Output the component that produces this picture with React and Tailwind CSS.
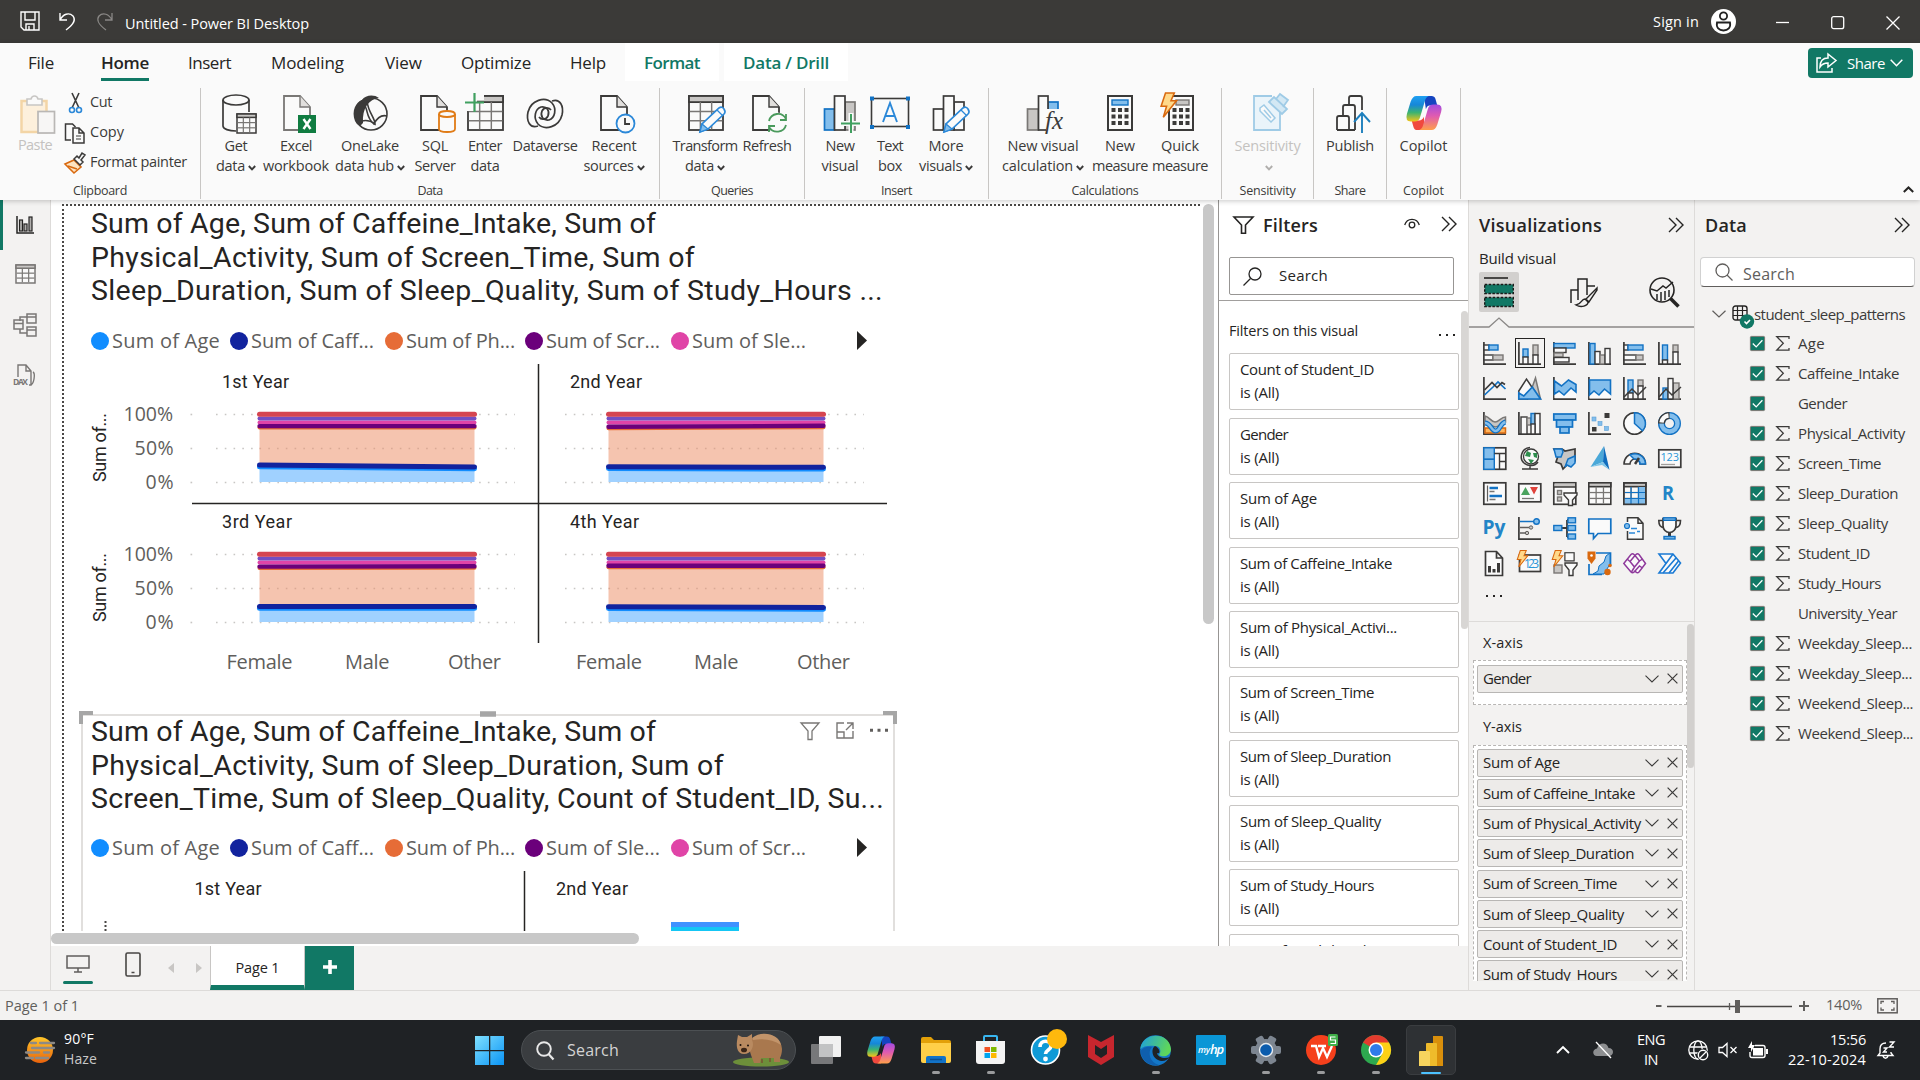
import React, { useLayoutEffect, useRef, useState } from "react";

/* Text run tracked so that it fills a given width */
function Fit({ w, className = "pb-[2px]", children }) {
  const ref = useRef(null);
  const [ls, setLs] = useState(0);
  useLayoutEffect(() => {
    const natural = ref.current.getBoundingClientRect().width;
    setLs((w - natural) / String(children).length);
  }, []);
  return (
    <span ref={ref} className={"inline-block whitespace-pre " + className} style={{ letterSpacing: ls ? ls + "px" : undefined }}>
      {children}
    </span>
  );
}

const D = "#3b3a39";
const kinds = {
  b: { fill: "#83beec", stroke: "#1272c4" },
  g: { fill: "#c8c6c4", stroke: "#797775" },
  w: { fill: "#fafafa", stroke: D },
  n: { fill: "none", stroke: D },
};
const R = ({ x, y, w, h, k = "w", s = 1.4 }) => <rect x={x} y={y} width={w} height={h} strokeWidth={s} {...kinds[k]} />;
const P = ({ d, c = D, f = "none", s = 1.5, ...o }) => <path d={d} stroke={c} fill={f} strokeWidth={s} {...o} />;
const Ax = () => <P d="M.9 0V22.2H23" s={1.7} />;

const Svg = ({ w, h, vb, className = "", children }) => (
  <svg width={w} height={h} viewBox={vb || `0 0 ${w} ${h}`} className={"shrink-0 overflow-visible " + className} fill="none">
    {children}
  </svg>
);

const Bolt = ({ t }) => <path transform={t} d="M5 0h8l-3 7h5L3 22l3-10H1z" fill="#ffd98a" stroke="#d9690f" strokeWidth="1.4" />;
const Pencil = ({ t }) => (
  <g transform={t}>
    <path d="M0 25l2-8L19 1q3-2 5 1t0 5L8 22z" fill="#fafafa" stroke="#2b88d8" strokeWidth="1.7" />
    <path d="M0 25l2-8 6 5z" fill="#83beec" stroke="#2b88d8" strokeWidth="1.3" />
    <path d="M17 3l6 6" stroke="#2b88d8" strokeWidth="1.2" />
  </g>
);
const Doc = ({ x = 6, c = D, f = "#fafafa" }) => (
  <g transform={`translate(${x} 1)`}>
    <path d="M1 1h16l10 11v23H1z" fill={f} stroke={c} strokeWidth="1.8" />
    <path d="M17 1v11h10" fill="#e1dfdd" stroke={c} strokeWidth="1.4" />
  </g>
);
const Grid = ({ x, y, w, h, c = D, head = "#c8c6c4", rows = 3, s = 1.5 }) => {
  const hh = h * 0.18;
  const rh = (h - hh) / rows;
  return (
    <g stroke={c} strokeWidth={s}>
      <rect x={x} y={y} width={w} height={h} fill="#fafafa" />
      <rect x={x} y={y} width={w} height={hh} fill={head} />
      {Array.from({ length: rows - 1 }, (_, i) => (
        <path key={i} strokeWidth={s * 0.8} stroke="#797775" d={`M${x + 0.7} ${y + hh + rh * (i + 1)}h${w - 1.4}`} />
      ))}
      <path strokeWidth={s * 0.8} stroke="#797775" d={`M${x + w / 3} ${y + hh}V${y + h - 0.7}M${x + (2 * w) / 3} ${y + hh}V${y + h - 0.7}`} />
    </g>
  );
};

const CopilotMark = ({ size, id, className = "" }) => (
  <Svg w={size} h={size} vb="0 0 40 40" className={className}>
    <defs>
      <linearGradient id={id + "a"} x1="0" y1="0" x2="0" y2="1">
        <stop offset="0" stopColor="#1fa0f2" /><stop offset=".35" stopColor="#1687d8" /><stop offset=".65" stopColor="#3cb371" /><stop offset="1" stopColor="#f5c518" />
      </linearGradient>
      <linearGradient id={id + "b"} x1="0" y1="0" x2="0" y2="1">
        <stop offset="0" stopColor="#a24be0" /><stop offset=".45" stopColor="#e05bb0" /><stop offset="1" stopColor="#ff9f4a" />
      </linearGradient>
    </defs>
    <path d="M20 2h8q3 0 4 3l2 7h-8q-3 0-4 4z" fill="#1544c0" />
    <path d="M20 38h-7q-3 0-4-3l-2-7h8q3 0 5-4z" fill="#f0493e" />
    <path d="M12 2h13q-3 1-4 5l-5 17q-1 5-6 5H6q-6 0-4-8L6 8q2-6 6-6z" fill={`url(#${id}a)`} />
    <path d="M28 38H15q3-1 4-5l5-17q1-5 6-5h4q6 0 4 8l-4 13q-2 6-6 6z" fill={`url(#${id}b)`} />
  </Svg>
);

/* ---------- Ribbon ---------- */
const icons = {
  get: (
    <>
      <path d="M7 6v26c0 3 6 5 13 5" stroke={D} strokeWidth="1.7" />
      <path d="M33 6v12" stroke={D} strokeWidth="1.7" />
      <ellipse cx="20" cy="6" rx="13" ry="5" stroke={D} strokeWidth="1.7" />
      <Grid x={21} y={20} w={19} h={19} />
    </>
  ),
  excel: (
    <>
      <Doc x={7} c="#797775" />
      <rect x="22" y="21" width="18" height="18" fill="#107c41" />
      <path d="M27.500 25l7 10M34.500 25l-7 10" stroke="#fff" strokeWidth="2.400" />
    </>
  ),
  lake: (
    <>
      <circle cx="21" cy="20" r="16" stroke={D} strokeWidth="1.6" />
      <path d="M5 27C1 17 6 8 12 6 15 1 24 0 29 4 19 5 12 14 13 29l-3 3q-4-2-5-5z" fill={D} />
      <path d="M13 9c6 6 2 14 11 21 4-8 9-9 13-8M17 7c1 11 8 17 8 23-4-3-9-4-13-3" stroke={D} strokeWidth="1.6" />
    </>
  ),
  sql: (
    <>
      <Doc x={5} />
      <path d="M24 20v15c0 4 16 4 16 0V20" fill="#fafafa" stroke="#e07b16" strokeWidth="1.8" />
      <ellipse cx="32" cy="20" rx="8" ry="3" fill="#fafafa" stroke="#e07b16" strokeWidth="1.8" />
    </>
  ),
  enter: (
    <>
      <Grid x={3} y={2} w={35} h={34} s={1.8} />
      <path d="M-1-2h20v8h-7v8h-3v3h-10z" fill="#fafafa" />
      <path d="M9.500-1v19M0 8.500h19" stroke="#40a060" strokeWidth="2.200" />
    </>
  ),
  verse: (
    <g stroke={D} strokeWidth="1.7">
      <path d="M13 32C5 35 1 27 3 18 6 6 20 2 27 9c5 6 3 15-3 17-6 1-9-4-7-9 2-4 7-4 9-1" />
      <path d="M27 7c8-3 12 5 10 14-3 12-17 16-24 9-5-6-3-15 3-17 6-1 9 4 7 9-2 4-7 4-9 1" />
    </g>
  ),
  recent: (
    <>
      <Doc x={6} />
      <circle cx="31.500" cy="29.500" r="9" fill="#fafafa" stroke="#2b88d8" strokeWidth="1.8" />
      <P d="M31 24v6h5" s={1.8} />
    </>
  ),
  transform: (
    <>
      <Grid x={4} y={2} w={34} h={34} s={1.8} />
      <Pencil t="translate(15 13)" />
    </>
  ),
  refresh: (
    <>
      <Doc x={5} />
      <circle cx="30.500" cy="29" r="10.500" fill="#fafafa" />
      <path d="M22 27c2-8 13-10 17-2M39 20v6h-6M39 31c-2 8-13 9-17 2M22 38v-6h6" stroke="#4a9a5c" strokeWidth="1.8" />
    </>
  ),
  newvis: (
    <>
      <R x={4.500} y={15} w={10} h={21} k="b" s={1.7} />
      <R x={25} y={8} w={10} h={28} k="g" s={1.7} />
      <R x={14.500} y={2} w={10.500} h={34} s={1.7} />
      <path d="M31 19v21M20 29.500h21" stroke="#fafafa" strokeWidth="5" />
      <path d="M31 20v19M21 29.500h19" stroke="#40a060" strokeWidth="2" />
    </>
  ),
  text: (
    <>
      <R x={1.500} y={4.500} w={37} h={28} k="n" s={1.6} />
      {[[0, 2.500], [36, 2.500], [0, 31], [36, 31]].map(([x, y], i) => <rect key={i} x={x} y={y} width="4" height="4" fill="#1272c4" />)}
      <path d="M13 28l7-19 7 19M15.500 22h9" stroke="#2b88d8" strokeWidth="1.9" />
    </>
  ),
  more: (
    <>
      <R x={7.500} y={15} w={10} h={21} s={1.7} />
      <R x={28} y={8} w={10} h={28} s={1.7} />
      <R x={17.500} y={2} w={10.500} h={34} s={1.7} />
      <Pencil t="translate(18 13)" />
    </>
  ),
  calc: (
    <>
      <R x={4.500} y={15} w={11} h={21} k="g" s={1.7} />
      <R x={25} y={8} w={10} h={9} k="b" s={1.7} />
      <R x={15.500} y={2} w={9.500} h={34} s={1.7} />
      <rect x="23" y="15" width="17" height="25" fill="#fafafa" />
      <text x="22" y="35" fontSize="25" fontStyle="italic" fill={D} className="font-['Liberation_Serif',serif]" textLength="18" lengthAdjust="spacingAndGlyphs">fx</text>
    </>
  ),
  measure: (
    <>
      <R x={8} y={2} w={24} h={34} s={2} />
      <R x={12} y={6} w={16} h={5} k="b" />
      {[14, 20.500, 27].map((y) => [11.500, 18, 24.500].map((x) => <rect key={x + "-" + y} x={x} y={y} width="4" height="4" fill={D} />))}
    </>
  ),
  quick: (
    <>
      <R x={9} y={2} w={24} h={34} s={2} />
      <R x={16} y={6} w={13} h={5} k="g" />
      {[14, 20.500, 27].map((y) => [12.500, 19, 25.500].map((x) => <rect key={x + "-" + y} x={x} y={y} width="4" height="4" fill={D} />))}
      <Bolt t="translate(0 -1) scale(1.1)" />
    </>
  ),
  sens: (
    <g stroke="#9fcbe6" strokeWidth="1.8">
      <path d="M32 16v20H6V2h18" fill="#eaf4fa" />
      <path d="M12 14l4-3 11 13-4 4-11-11zM16 16l7 8" fill="#fafafa" strokeWidth="1.5" />
      <path d="M21 8l5-5 13 12-5 5zM28 5l4-5 8 6-5 7" fill="#d3e8f4" />
    </g>
  ),
  publish: (
    <>
      <P s={1.8} d="M7 36h18M7 36V24q0-2 2-2h8q2 0 2 2v12M13 22v-9q0-2 2-2h8q2 0 2 2v23M19 11V4q0-2 2-2h9q2 0 2 2v12" />
      <path d="M32 39V20M24 28l8-9 8 9" stroke="#1d7fbd" strokeWidth="1.9" />
    </>
  ),
};

const Caret = ({ c = D }) => (
  <Svg w={8} h={6} className="ml-[3px] mt-[1px]"><path d="M.8 1l3.200 3.400L7.200 1" stroke={c} strokeWidth="1.9" /></Svg>
);

function Big({ icon, w, l1, l2, caret, dim }) {
  return (
    <div className={"flex shrink-0 flex-col items-center " + (dim ? "text-[#c4c2c0]" : "text-[#3b3a39]")} style={{ width: w }}>
      {icon === "copilot" ? (
        <div className="mt-[6px] h-[40px]"><CopilotMark size={38} id="cr" /></div>
      ) : (
        <Svg w={40} h={40} className="mt-[6px]">{icons[icon]}</Svg>
      )}
      <div className="mt-[3px] flex h-[20px] items-center justify-center text-[14.500px]"><Fit w={l1[1]}>{l1[0]}</Fit></div>
      <div className="flex h-[20px] items-center justify-center text-[14.500px]">
        {l2 && <Fit w={l2[1]}>{l2[0]}</Fit>}
        {caret && <Caret c={dim ? "#b0aeac" : D} />}
      </div>
    </div>
  );
}

function Group({ w, pl, label, lw, children }) {
  return (
    <div className="flex h-[111px] flex-col border-r border-[#c8c6c4]" style={{ width: w }}>
      <div className="flex h-[93px]" style={{ paddingLeft: pl }}>{children}</div>
      <div className="flex h-[18px] items-center justify-center pt-[2px] text-[12.500px] text-[#3b3a39]"><Fit w={lw} className="">{label}</Fit></div>
    </div>
  );
}

function TitleBar() {
  return (
    <div className="flex h-[43px] items-center bg-[#3b3a38] text-white">
      <Svg w={20} h={20} className="ml-[20px] -mt-[1px]">
        <path d="M1 1h18v18H4l-3-3zM5 1v8h10V1M6 19v-6h8v6M9 15v4" stroke="#fff" strokeWidth="1.4" />
      </Svg>
      <Svg w={17} h={19} className="ml-[19px]"><path d="M1 1v7h7M1 8c3-6 9-8 13-4 3 4 1 8-7 14" stroke="#fff" strokeWidth="1.400" /></Svg>
      <Svg w={17} h={19} className="ml-[20px]"><path d="M16 1v7H9M16 8C13 2 7 0 3 4c-3 4-1 8 7 14" stroke="#8a8886" strokeWidth="1.300" /></Svg>
      <div className="ml-[12px] mt-[5px] text-[14.500px]"><Fit w={184} className="">Untitled - Power BI Desktop</Fit></div>
      <div className="grow" />
      <div className="text-[14.500px]"><Fit w={46} className="">Sign in</Fit></div>
      <Svg w={25} h={25} className="ml-[12px]">
        <circle cx="12.500" cy="12.500" r="12.500" fill="#fff" />
        <circle cx="12.500" cy="7" r="3.600" stroke="#222" strokeWidth="1.8" />
        <path d="M6 13.500h13c1 5-2 8-6.500 8S5 18.500 6 13.500z" stroke="#222" strokeWidth="1.8" />
      </Svg>
      <Svg w={14} h={14} className="ml-[40px]"><path d="M0 7.500h13" stroke="#fff" strokeWidth="1.3" /></Svg>
      <Svg w={14} h={14} className="ml-[41px] mt-[3px]"><rect x=".7" y=".7" width="12" height="12" rx="2" stroke="#fff" strokeWidth="1.3" /></Svg>
      <Svg w={14} h={14} className="ml-[41px] mr-[20px] mt-[3px]"><path d="M.5 .5l13 13M13.500 .5l-13 13" stroke="#fff" strokeWidth="1.3" /></Svg>
    </div>
  );
}

function Tabs() {
  const tabs = [["File", 26, 28], ["Home", 48, 47], ["Insert", 43, 39], ["Modeling", 73, 40], ["View", 37, 41], ["Optimize", 70, 39], ["Help", 36, 39]];
  return (
    <div className="flex h-[38px] text-[17px] text-[#252423]">
      {tabs.map(([t, w, ml]) => (
        <div key={t} style={{ marginLeft: ml, width: w }} className={"flex items-center whitespace-nowrap " + (t === "Home" ? "border-b-[3px] border-[#117865] pt-[4px] font-semibold" : "pt-[1px]")}>
          <Fit w={w} className="">{t}</Fit>
        </div>
      ))}
      <div className="ml-[19px] flex w-[94px] items-center justify-center bg-white pt-[1px] font-semibold text-[#117865]"><Fit w={56} className="">Format</Fit></div>
      <div className="ml-[5px] flex w-[124px] items-center justify-center bg-white pt-[1px] font-semibold text-[#117865]"><Fit w={86} className="">Data / Drill</Fit></div>
      <div className="ml-auto mr-[7px] mt-[5px] flex h-[30px] w-[105px] items-center rounded bg-[#117865] pl-[8px] text-[15px] text-white">
        <Svg w={21} h={20}>
          <path d="M5 5H1v14h15v-4" stroke="#fff" strokeWidth="1.500" />
          <path d="M12 1l8 6.500-8 6.500v-4c-4 0-6 1-8 4 0-6 3-9 8-9z" stroke="#fff" strokeWidth="1.500" />
        </Svg>
        <span className="ml-[10px]"><Fit w={38} className="">Share</Fit></span>
        <Svg w={13} h={8} className="ml-[5px]"><path d="M.7 .7l5.800 6 5.800-6" stroke="#fff" strokeWidth="1.500" /></Svg>
      </div>
    </div>
  );
}

function Ribbon() {
  return (
    <div className="relative z-10 h-[157px] bg-[#fafafa] shadow-[0_1px_5px_rgba(0,0,0,.22)]">
      <Tabs />
      <div className="flex pt-[7px]">
        <Group w={201} pl={0} label="Clipboard" lw={54}>
          <div className="w-[64px] pl-[19px] pt-[7px] text-[#c4c2c0]">
            <Svg w={36} h={38}>
              <rect x="2.500" y="6" width="25" height="31" fill="#fdf0dc" stroke="#f3d5a6" strokeWidth="2.500" />
              <path d="M8 4h4c1-4 6-4 7 0h4v6H8z" fill="#fafafa" stroke="#c8c6c4" strokeWidth="1.6" />
              <rect x="19" y="16.500" width="16.500" height="21.500" fill="#f7f6f5" stroke="#b9b7b5" strokeWidth="1.7" />
            </Svg>
            <div className="-ml-[1px] mt-[3px] flex h-[20px] items-center text-[14.500px]"><Fit w={34}>Paste</Fit></div>
          </div>
          <div className="text-[14.500px] text-[#3b3a39]">
            <div className="flex h-[30px] items-center">
              <Svg w={22} h={22} className="mr-[4px]">
                <path d="M8 1l7 15M15 1L8 16" stroke={D} strokeWidth="1.600" />
                <circle cx="8" cy="18" r="2.500" stroke="#2b88d8" strokeWidth="1.600" /><circle cx="15" cy="18" r="2.500" stroke="#2b88d8" strokeWidth="1.600" />
              </Svg>
              <Fit w={22}>Cut</Fit>
            </div>
            <div className="flex h-[30px] items-center">
              <Svg w={22} h={22} className="mr-[4px]">
                <path d="M7 18H1.500V2h7l3 3" stroke={D} strokeWidth="1.500" />
                <path d="M9 6h6l5 5v10H9zM15 6v5h5" fill="#fafafa" stroke={D} strokeWidth="1.500" /><path d="M12 14h5M12 17h5" stroke={D} />
              </Svg>
              <Fit w={34}>Copy</Fit>
            </div>
            <div className="flex h-[30px] items-center">
              <Svg w={22} h={22} className="mr-[4px]">
                <path d="M1 12l9-4 7 7-7 6z" fill="#fde3c0" stroke="#d9690f" strokeWidth="1.600" /><path d="M4 14l9 3" stroke="#d9690f" strokeWidth="1.400" />
                <path d="M10 7l3-3 2 2 3-5 3 2-4 5 2 2-3 3z" fill="#fafafa" stroke={D} strokeWidth="1.500" />
              </Svg>
              <Fit w={97}>Format painter</Fit>
            </div>
          </div>
        </Group>
        <Group w={459} pl={5} label="Data" lw={25}>
          <Big icon="get" w={60} l1={["Get", 23]} l2={["data", 29]} caret />
          <Big icon="excel" w={60} l1={["Excel", 32]} l2={["workbook", 66]} />
          <Big icon="lake" w={88} l1={["OneLake", 58]} l2={["data hub", 59]} caret />
          <Big icon="sql" w={42} l1={["SQL", 26]} l2={["Server", 41]} />
          <Big icon="enter" w={58} l1={["Enter", 34]} l2={["data", 29]} />
          <Big icon="verse" w={62} l1={["Dataverse", 65]} />
          <Big icon="recent" w={76} l1={["Recent", 45]} l2={["sources", 50]} caret />
        </Group>
        <Group w={145} pl={7} label="Queries" lw={42}>
          <Big icon="transform" w={76} l1={["Transform", 65]} l2={["data", 29]} caret />
          <Big icon="refresh" w={48} l1={["Refresh", 49]} />
        </Group>
        <Group w={184} pl={10} label="Insert" lw={31}>
          <Big icon="newvis" w={50} l1={["New", 29]} l2={["visual", 37]} />
          <Big icon="text" w={50} l1={["Text", 26]} l2={["box", 24]} />
          <Big icon="more" w={62} l1={["More", 35]} l2={["visuals", 43]} caret />
        </Group>
        <Group w={233} pl={4} label="Calculations" lw={67}>
          <Big icon="calc" w={100} l1={["New visual", 71]} l2={["calculation", 71]} caret />
          <Big icon="measure" w={54} l1={["New", 30]} l2={["measure", 56]} />
          <Big icon="quick" w={66} l1={["Quick", 38]} l2={["measure", 56]} />
        </Group>
        <Group w={92} pl={0} label="Sensitivity" lw={56}>
          <Big icon="sens" w={91} l1={["Sensitivity", 66]} caret dim />
        </Group>
        <Group w={73} pl={0} label="Share" lw={31}>
          <Big icon="publish" w={72} l1={["Publish", 48]} />
        </Group>
        <Group w={74} pl={0} label="Copilot" lw={41}>
          <Big icon="copilot" w={73} l1={["Copilot", 48]} />
        </Group>
        <Svg w={11} h={7} className="ml-auto mr-[6px] mt-[98px]"><path d="M.8 6l4.700-4.500L10.200 6" stroke="#252423" strokeWidth="2" /></Svg>
      </div>
    </div>
  );
}

/* ---------- Left rail ---------- */
function Rail() {
  const g = "#797775";
  return (
    <div className="flex w-[51px] shrink-0 border-r border-[#dddbd9] bg-[#f3f2f1]">
      <div className="h-[50px] w-[3px] bg-[#117865]" />
      <div className="flex w-[47px] flex-col items-center pr-[3px]">
        <Svg w={18} h={18} className="mt-[16px]">
          <path d="M1 0v17h17" stroke="#252423" strokeWidth="1.500" />
          {[[3.500, 4, 11], [8, 8, 7], [13, 1, 14]].map(([x, y, h]) => <rect key={x} x={x} y={y} width="3" height={h} fill="#b0aeac" stroke="#252423" strokeWidth="1.2" />)}
        </Svg>
        <Svg w={21} h={20} className="mt-[30px]"><Grid x={1} y={1} w={19} h={18} c={g} s={1.5} /></Svg>
        <Svg w={24} h={24} className="mt-[29px]">
          <g stroke={g} strokeWidth="1.500"><path d="M7 8V4h7M7 16v4h7" /><rect x="1" y="7" width="9" height="9" /><rect x="14" y="1" width="9" height="9" /><rect x="14" y="14" width="9" height="9" /><path d="M1 10.500h9M14 4h9M14 17h9" /></g>
        </Svg>
        <div className="mt-[27px] flex flex-col items-start">
          <Svg w={22} h={22} className="-ml-[2px]">
            <path d="M5 13V1h8l5 6v14h-2M13 1v6h5M20 8q2 1 1 7t-4 6" stroke={g} strokeWidth="1.400" />
            <rect x="0" y="14" width="16" height="8" fill="#f3f2f1" />
            <text x="0" y="21" fontSize="8.500" fontWeight="700" fill={g} className="font-['Open_Sans',sans-serif]" textLength="15">DAX</text>
          </Svg>
        </div>
      </div>
    </div>
  );
}

/* ---------- Canvas visuals ---------- */
function VTitle({ lines }) {
  return (
    <div className="font-['Roboto',sans-serif] text-[28.500px] text-[#252423]">
      {lines.map(([t, w]) => <div key={t} className="flex h-[33.700px] items-center leading-none"><Fit w={w} className="">{t}</Fit></div>)}
    </div>
  );
}

function Legend({ items }) {
  return (
    <div className="flex h-[24px] items-center text-[20px] text-[#605e5c]">
      {items.map(([t, w, slot, c]) => (
        <div key={t} className="flex shrink-0 items-center" style={{ width: slot }}>
          <span className="mb-[2px] mr-[3px] h-[18px] w-[18px] shrink-0 rounded-full" style={{ backgroundColor: c }} />
          <Fit w={w}>{t}</Fit>
        </div>
      ))}
      <Svg w={10} h={19} className="-mt-[3px]"><path d="M0 0l10 9.500L0 19z" fill="#252423" /></Svg>
    </div>
  );
}

const din = "font-['Roboto',sans-serif]";
const seg = "font-['Open_Sans',sans-serif]";

function Facet({ x, y, db, pu, label, lx, lw, first }) {
  const x1 = x + 215;
  const line = (a, b, c, s = 5) => <path d={`M${x} ${y + a}L${x1} ${y + b}`} stroke={c} strokeWidth={s} strokeLinecap="round" />;
  const gx = x - 43.5;
  return (
    <g>
      <text x={lx} y={y - 24.500} fontSize="18" fill="#252423" textLength={lw} className={din}>{label}</text>
      {[2.500, 36.500, 70.500].map((g) => (
        <g key={g}>
          <path d={`M${gx} ${y + g}h299`} stroke="#c8c6c4" strokeWidth="1.6" strokeDasharray="1.6 7.170" />
          {first && <path d={`M190.500 ${y + g}h1.700`} stroke="#c8c6c4" strokeWidth="1.6" />}
        </g>
      ))}
      <rect x={x} y={y + 17} width="215" height="37" fill="#f5c4af" />
      <path d={`M${x} ${y + 36.500}h215`} stroke="#d9a995" strokeWidth="1.6" strokeDasharray="1.6 7.170" />
      <rect x={x} y={y + 56} width="215" height="14" fill="#a0d1ff" />
      {line(pu[0] + 1.800, pu[1] + 1.800, "#e66c37", 4)}
      {line(10.500, 10.500, "#e044a7", 4)}
      {line(pu[0] + 0.300, pu[1] + 0.300, "#6b007b", 4.4)}
      {line(6.500, 6.500, "#744ec2", 4)}
      {line(2.300, 2.300, "#d64550")}
      {line(db[0] + 1.800, db[1] + 1.800, "#118dff")}
      {line(db[0], db[1], "#12239e")}
    </g>
  );
}

function SmallMultiples() {
  return (
    <Svg w={810} h={337} vb="91 353 810 337">
      <path d="M538.500 364V643" stroke="#252423" strokeWidth="1.500" />
      <path d="M192 503.500H887" stroke="#252423" strokeWidth="1.500" />
      <Facet x={259.5} y={412} db={[53, 55]} pu={[13.800, 13.800]} label="1st Year" lx={222} lw={67} first />
      <Facet x={608.5} y={412} db={[54.800, 55.300]} pu={[14.500, 13.500]} label="2nd Year" lx={570} lw={72} />
      <Facet x={259.5} y={552} db={[54.500, 54.500]} pu={[14.300, 14]} label="3rd Year" lx={222} lw={70} first />
      <Facet x={608.5} y={552} db={[54.800, 55.500]} pu={[13.500, 13.500]} label="4th Year" lx={570} lw={69} />
      {[414, 554].map((y) => (
        <g key={y} fill="#605e5c" fontSize="19.5" className={seg}>
          <text x="123.500" y={y + 6.500} textLength="49.500">100%</text>
          <text x="134.500" y={y + 40.500} textLength="39">50%</text>
          <text x="145.500" y={y + 74.500} textLength="28">0%</text>
          <text transform={`translate(105.500 ${y + 68}) rotate(-90)`} fontSize="18" fill="#252423" textLength="69" className={din}>Sum of...</text>
        </g>
      ))}
      {[[226.5, 576], [345, 694], [448, 797]].map((xs, i) =>
        xs.map((x) => (
          <text key={x} x={x} y="668.500" fontSize="20" fill="#605e5c" className={seg} textLength={[66, 44.500, 53][i]}>{["Female", "Male", "Other"][i]}</text>
        ))
      )}
    </Svg>
  );
}

function Canvas() {
  const colors = ["#118dff", "#12239e", "#e66c37", "#6b007b", "#e044a7"];
  const leg = (d, e) => [["Sum of Age", 108, 139], ["Sum of Caff...", 123, 155], ["Sum of Ph...", 109, 140], [d, 114, 146], [e, 114, 186]].map((r, i) => [...r, colors[i]]);
  return (
    <div className="flex h-[746px] w-[1167px] flex-col bg-white">
      <div className="flex h-[731px]">
        <div className="ml-[11px] mt-[4px] h-[727px] w-[1138px] overflow-hidden border-l-2 border-t-2 border-dotted border-[#4a4846]">
          <div className="h-[507.500px] pl-[27px] pt-[1.500px]">
            <VTitle lines={[["Sum of Age, Sum of Caffeine_Intake, Sum of", 565], ["Physical_Activity, Sum of Screen_Time, Sum of", 604], ["Sleep_Duration, Sum of Sleep_Quality, Sum of Study_Hours ...", 792]]} />
            <div className="h-[21.500px]" />
            <Legend items={leg("Sum of Scr...", "Sum of Sle...")} />
            <div className="-mt-[1px]"><SmallMultiples /></div>
          </div>
          <div className="relative ml-[17px] h-[230px] w-[814px] border-x-2 border-t-2 border-[#e1dfdd] pl-[8px]">
            <VTitle lines={[["Sum of Age, Sum of Caffeine_Intake, Sum of", 565], ["Physical_Activity, Sum of Sleep_Duration, Sum of", 633], ["Screen_Time, Sum of Sleep_Quality, Count of Student_ID, Su...", 793]]} />
            <div className="h-[20px]" />
            <Legend items={leg("Sum of Sle...", "Sum of Scr...")} />
            <Svg w={800} h={71} vb="91 861 800 71">
              <path d="M524.500 871V931" stroke="#252423" strokeWidth="1.500" />
              <g className={din} fontSize="18" fill="#252423">
                <text x="194.500" y="895" textLength="67">1st Year</text>
                <text x="556" y="895" textLength="72">2nd Year</text>
              </g>
              <path d="M104.500 921h2v2h-2zM104.500 925h2v2h-2zM104.500 929h2v2h-2z" fill="#484644" />
              <rect x="671" y="922" width="68" height="5" fill="#4092ff" />
              <rect x="671" y="927" width="68" height="5" fill="#15c6f4" />
            </Svg>
            {/* selection handles and hover actions over the visual */}
            <Svg w={818} h={14} className="absolute -left-[4px] -top-[5px]">
              <path d="M2 13V2h12" stroke="#a6a6a6" strokeWidth="4" />
              <path d="M816 13V2h-12" stroke="#a6a6a6" strokeWidth="4" />
              <path d="M401 3h16" stroke="#a6a6a6" strokeWidth="5.500" />
            </Svg>
            <div className="absolute right-[5px] top-[6px] flex items-center gap-[16px] bg-white">
              <Svg w={20} h={18}><path d="M1 1h18l-7 8v8.500H8V9z" stroke="#797775" strokeWidth="1.3" /></Svg>
              <Svg w={18} h={17}><path d="M8 1H1v15h16V9M11 1h6v6M17 1l-7 7M1 10h7v6" stroke="#797775" strokeWidth="1.400" /></Svg>
              <Svg w={18} h={4} className="-mt-[2px]"><path d="M0 .7h3v3H0zM7.500 .7h3v3h-3zM15 .7h3v3h-3z" fill="#605e5c" /></Svg>
            </div>
          </div>
        </div>
        <div className="ml-[3px] mt-[4px] h-[420px] w-[11px] rounded-full bg-[#c8c8c8]" />
      </div>
      <div className="mt-[2px] h-[11px] w-[588px] rounded-full bg-[#c8c8c8]" />
    </div>
  );
}

/* ---------- Panels ---------- */
const Chevrons = () => <Svg w={16} h={16}><path d="M1 1l7 7-7 7M8 1l7 7-7 7" stroke="#252423" strokeWidth="1.400" /></Svg>;
const Ell = ({ className = "" }) => <Svg w={16} h={3} className={className}><path d="M0 0h2v2H0zM7 0h2v2H7zM14 0h2v2h-2z" fill="#252423" /></Svg>;

function Filters() {
  const cards = [["Count of Student_ID", 134], ["Gender", 48], ["Sum of Age", 77], ["Sum of Caffeine_Intake", 152], ["Sum of Physical_Activi...", 157], ["Sum of Screen_Time", 134], ["Sum of Sleep_Duration", 151], ["Sum of Sleep_Quality", 141], ["Sum of Study_Hours", 134], ["Sum of Weekday_Sle...", 144]];
  return (
    <div className="h-[746px] w-[250px] overflow-hidden border-l border-[#979593] bg-white text-[#252423]">
      <div className="flex h-[50px] items-center pl-[14px]">
        <Svg w={21} h={18}><path d="M1 1h19l-7.500 8v8.300h-4V9z" stroke="#252423" strokeWidth="1.600" /></Svg>
        <div className="ml-[9px] text-[18px] font-semibold"><Fit w={55} className="">Filters</Fit></div>
        <Svg w={16} h={12} className="-mt-[3px] ml-[86px]"><path d="M.7 7C3-.5 13-.5 15.300 7" stroke="#252423" strokeWidth="1.3" /><circle cx="8" cy="7" r="2.800" stroke="#252423" strokeWidth="1.3" /></Svg>
        <div className="-mt-[2px] ml-[21px]"><Chevrons /></div>
      </div>
      <div className="ml-[10px] mt-[7px] flex h-[38px] w-[225px] items-center rounded-[2px] border border-[#979593] pl-[13px] text-[15px]">
        <Svg w={19} h={19}><circle cx="12" cy="7" r="6" stroke="#252423" strokeWidth="1.3" /><path d="M7.500 11.500L.5 18.500" stroke="#252423" strokeWidth="1.3" /></Svg>
        <div className="ml-[17px] flex"><Fit w={49}>Search</Fit></div>
      </div>
      <div className="mt-[5px] h-px bg-[#a19f9d]" />
      <div className="flex">
        <div className="w-[240px] pl-[10px]">
          <div className="flex h-[52px] items-center justify-between pt-[10px] text-[14.500px]">
            <Fit w={129}>Filters on this visual</Fit>
            <Ell className="mr-[4px] mt-[6px]" />
          </div>
          {cards.map(([t, w]) => (
            <div key={t} className="mb-[7.500px] flex h-[57px] flex-col rounded-[2px] border border-[#c8c6c4] pl-[10px] pt-[5px] text-[15px]">
              <div className="flex h-[23px] items-center"><Fit w={w}>{t}</Fit></div>
              <div className="flex h-[23px] items-center"><Fit w={39}>is (All)</Fit></div>
            </div>
          ))}
        </div>
        <div className="ml-[2px] mt-[10px] h-[318px] w-[7px] rounded-full bg-[#d8d6d4]" />
      </div>
    </div>
  );
}

const Combo = ({ a }) => <P d={a} s={1.5} />;
const BL = "#1272c4";
const vizIcons = [
  <><Ax /><R x={1} y={3} w={5} h={5} /><R x={6} y={3} w={9} h={5} k="b" /><R x={1} y={13} w={9} h={5} /><R x={10} y={13} w={10} h={5} k="g" /></>,
  <><Ax /><R x={5} y={7} w={5} h={8} k="b" /><R x={5} y={15} w={5} h={7} /><R x={15} y={3} w={5} h={10} k="g" /><R x={15} y={13} w={5} h={9} /></>,
  <><Ax /><R x={1} y={1.500} w={21} h={4.500} k="b" /><R x={1} y={6} w={12} h={4.500} /><R x={1} y={11} w={9} h={4} k="g" /><R x={1} y={15.500} w={15} h={4.500} /></>,
  <><Ax /><R x={2} y={1.500} w={5} h={20.500} k="b" /><R x={7} y={9.500} w={5} h={12.500} /><R x={12} y={13} w={5} h={9} k="g" /><R x={17} y={6.500} w={5} h={15.500} /></>,
  <><Ax /><R x={1} y={3} w={4} h={5} /><R x={5} y={3} w={15} h={5} k="b" /><R x={1} y={13} w={12} h={5} /><R x={13} y={13} w={7} h={5} k="g" /></>,
  <><Ax /><R x={4.500} y={3} w={5} h={15} k="b" /><R x={4.500} y={18} w={5} h={4} /><R x={15} y={3} w={5} h={7} k="g" /><R x={15} y={10} w={5} h={12} /></>,
  <><Ax /><P d="M1.500 18L10 10l5-5 7.500 7" c={BL} s={1.700} /><P d="M1.500 13L9 5.500l5 5 5-5 3 2" s={1.700} /></>,
  <><P d="M10 22L17.500 1l5 21z" c="#797775" f="#c8c6c4" /><P d="M.8 14L8.500 2l8 12-7 8H.8z" f="#fafafa" /><P d="M.8 22v-6l5 3 8.500-9L22.500 22z" c={BL} f="#83beec" s={1.700} /></>,
  <><Ax /><path d="M1.500 4l7 5 7-6 7.500 4.500V21H1.500z" fill="#fafafa" /><P d="M1.500 4l7 5 7-6 7.500 4.500V15l-5-4-7 7-5-4-4.500 3z" c={BL} f="#83beec" s={1.600} /></>,
  <><Ax /><path d="M1.500 14h21v7.500h-21z" fill="#fafafa" /><P d="M1.500 3H22.500v14l-6-5-5.500 6-5-4-4.500 4z" c={BL} f="#83beec" s={1.600} /></>,
  <><Ax /><R x={5} y={3} w={5} h={13} k="b" /><R x={5} y={16} w={5} h={6} /><R x={15} y={3} w={5} h={6} k="g" /><R x={15} y={9} w={5} h={13} /><Combo a="M1 20l8-8 6 6 8-8" /></>,
  <><Ax /><R x={5} y={11} w={5} h={11} k="b" /><R x={15} y={6} w={6} h={16} k="g" /><R x={10} y={1.500} w={5} h={20.500} /><Combo a="M1 20l7-8 6 6 9-8" /></>,
  <><Ax /><P d="M2 16h4l6 4 5-4h5.500v5H2z" c="#d9690f" f="#ffb45c" /><P d="M2 4c5 1 6 6 10 6s6-5 10.500-5v5c-5 0-6 5-10 5S7 10 2 10z" c="#797775" f="#c8c6c4" /><P d="M2 11c6 0 6 8 10.500 8S17 11 22.500 10" c={BL} s={5} /><P d="M2 11c6 0 6 8 10.500 8S17 11 22.500 10" c="#83beec" s={2.500} /></>,
  <><Ax /><R x={3} y={5} w={6} h={17} /><R x={9} y={6} w={4} h={7} k="g" /><R x={13} y={1.500} w={4} h={11} k="b" /><R x={17} y={1.500} w={5} h={20.500} /><R x={13} y={12} w={4} h={10} /></>,
  <><R x={.8} y={2} w={22} h={6} k="b" s={1.700} /><R x={3.500} y={8} w={16} h={7} k="b" s={1.700} /><R x={7} y={15} w={9} h={6} k="b" s={1.700} /></>,
  <><Ax /><rect x="16.500" y="1" width="5" height="5" fill={D} /><rect x="4" y="15" width="4.500" height="4.500" fill={D} />{[[4, 5], [10, 9.500], [16.500, 14.500]].map(([x, y]) => <rect key={x} x={x} y={y} width="4" height="4" fill="#83beec" stroke="#5a9fd6" strokeWidth=".6" />)}</>,
  <><circle cx="11.500" cy="11.500" r="10.700" fill="#fafafa" stroke={D} strokeWidth="1.600" /><P d="M11.500 .8a10.700 10.700 0 0 1 8 18L11.500 11.500z" c={BL} f="#83beec" /></>,
  <><circle cx="11.500" cy="11.500" r="8" fill="none" stroke={BL} strokeWidth="7" /><circle cx="11.500" cy="11.500" r="8" fill="none" stroke="#83beec" strokeWidth="4.400" /><path d="M3.500 11.500a8 8 0 0 1 8-8" stroke={D} strokeWidth="7" /><path d="M3.500 10.500a8 8 0 0 1 7-7" stroke="#fafafa" strokeWidth="4.400" /></>,
  <><R x={.8} y={.8} w={22} h={21.500} s={1.700} /><R x={.8} y={.8} w={10.500} h={11.500} k="b" /><R x={.8} y={12.300} w={10.500} h={10} k="b" /><P d="M11.300 6.500H22.500M16.500 6.500v16M16.500 14.500h6" s={1.400} /></>,
  <><circle cx="13" cy="9.500" r="7.500" fill="#fafafa" stroke={D} strokeWidth="1.300" /><path d="M9 4l4 2-1 4-5-1zM15 6l4 0v5l-3-1zM10 12l6 1-3 4z" fill="#2f8f4e" /><P d="M12 .5C3 1 1 12 6 16s11 3 14-1M12 18v4M4 22h16" /></>,
  <><P d="M1 2h8l3 2 10-2v12l-4 5-4-1-4 4-2-5-5-2 2-6z" f="#c8c6c4" s={1.700} /><P d="M1 2h8l1 3-2 5H3z" c={BL} f="#83beec" /><P d="M15 12l7-3v7l-4 4-4-2-2 2z" c={BL} f="#83beec" /></>,
  <><path d="M16-1L2.500 20 15 15z" fill="#4aa8d8" /><path d="M16-1l5.500 24L15 15z" fill="#0f6cbd" /><path d="M2.500 20L15 15l6 7.500L14 18z" fill="#7cc4e8" /></>,
  <><P d="M1 17A10.500 10.500 0 0 1 22.500 17H17a5 5 0 0 0-10 0z" f="#fafafa" /><P d="M7 8A10.500 10.500 0 0 1 22.500 17H17a5 5 0 0 0-6-5z" c={BL} f="#83beec" /><P d="M12 17l4-6" s={2.500} /></>,
  <><R x={.8} y={2.800} w={22} h={17.500} s={1.700} /><text x="2.500" y="14" fontSize="11" fill="#2b96d8" textLength="18.500" className={seg}>123</text><P d="M3 17.500h14" c="#a19f9d" s={1.300} /></>,
  <><R x={.8} y={.8} w={22} h={21.500} s={1.700} /><P d="M4.500 3.500v16" c="#605e5c" s={1.200} /><P d="M6.500 6H15M6.500 14H19" c={BL} s={2.400} /><P d="M6.500 9.500h5M6.500 17.500h6" c="#797775" s={1.400} /></>,
  <><R x={.8} y={1.800} w={22} h={18} s={1.700} /><path d="M3 13l4.500-8 4.500 8z" fill="#4aa35e" /><path d="M12 5h8l-4 7.500z" fill="#e0433c" /><P d="M4 16.500h12" c="#797775" s={1.300} /></>,
  <><R x={.8} y={.8} w={22} h={21.500} s={1.700} /><rect x="1.500" y="1.500" width="20.500" height="3.500" fill="#c8c6c4" /><P d="M1 5h21.500" /><R x={4.500} y={8.500} w={4} h={4} k="g" /><R x={4.500} y={15} w={4} h={4} k="g" /><P d="M11 11h13v2l-4.500 5v5.500h-4V18L11 13z" f="#fafafa" s={1.400} /></>,
  <Grid x={.8} y={.8} w={22} h={21.500} s={1.600} />,
  <><Grid x={.8} y={.8} w={22} h={21.500} s={1.600} /><path d="M15 5h7v17h-7zM1.500 16.500H15V22H1.500z" fill="#83beec" /><P d="M8 5v17M15.500 5v17M1.500 10.500h21M1.500 16.500h21" c={BL} s={1.200} /><R x={.8} y={.8} w={22} h={21.500} k="n" s={1.600} /></>,
  <text x="4" y="18" fontSize="20" fontWeight="700" fill="#2285c7" textLength="12" lengthAdjust="spacingAndGlyphs" className={seg}>R</text>,
  <text x="-.5" y="17" fontSize="20" fontWeight="700" fill="#2285c7" textLength="23" lengthAdjust="spacingAndGlyphs" className={seg}>Py</text>,
  <><Ax /><P d="M2 4.500h14" c={BL} /><circle cx="18.500" cy="4.500" r="2.800" fill="#83beec" stroke={BL} strokeWidth="1.400" /><P d="M2 10.500h9M2 16h6" c="#605e5c" /><circle cx="13" cy="10.500" r="1.700" fill="#c8c6c4" stroke="#605e5c" /><circle cx="9" cy="16" r="1.700" fill="#c8c6c4" stroke="#605e5c" /></>,
  <><P d="M8 11h6M14 3v17M14 3h2M14 20h2M14 11h2" s={1.800} /><R x={.8} y={8.500} w={8} h={5} k="b" /><R x={15} y={.8} w={7.500} h={5} k="b" /><R x={15} y={8.500} w={7.500} h={5} k="b" /><R x={15} y={17} w={7.500} h={5} k="b" /></>,
  <P d="M.8 2h22v14.500H10L5.500 21.500v-5H.8z" c={BL} f="#fafafa" s={1.700} />,
  <><P d="M4.500 5V.8H15l5 5.500v16H4.500V14M15 .8v5.500h5" f="#fafafa" /><circle cx="4" cy="9" r="2.500" fill="#83beec" stroke={BL} strokeWidth="1.200" /><P d="M8 11.500h6M6 16h6M14 14.500h3" c="#2b88d8" s={1.300} /></>,
  <><P d="M5 1.500h13v7c0 4-3 7-6.500 7S5 12.500 5 8.500z" f="#fafafa" s={1.700} /><P d="M5 3.500H.8c0 5 2 7 5 7M18 3.500h4.500c0 5-2 7-5 7" s={1.600} /><R x={5.500} y={.8} w={12} h={2.500} k="b" /><P d="M11.500 16v4" s={3} /><R x={6} y={19.500} w={11} h={2.500} k="b" /></>,
  <><P d="M2.500 -.5h11l6 6.500v17.500h-17zM13.500 -.5V6h6" f="#fafafa" s={1.700} /><path d="M5 14h3v6.500H5zM9.500 17h3v3.500h-3zM14 11h3v9.500h-3z" fill={D} /></>,
  <><R x={1.500} y={3} w={21} h={16.500} s={1.700} /><text x="6" y="16" fontSize="12" fill="#2b96d8" textLength="15" className={seg}>123</text><Bolt t="translate(-1.500 -1.500) scale(.75)" /></>,
  <><R x={12} y={.8} w={9} h={8} k="g" /><R x={1} y={13} w={8} h={8} k="g" /><R x={12} y={.8} w={9} h={8} s={1} /><P d="M12 11h12v2l-4 5v5.500h-4V18l-4-5z" f="#fafafa" s={1.400} /><Bolt t="translate(-1.500 -1.500) scale(.75)" /></>,
  <><P d="M8 1h14.500v12M1 12v10.500h13" c={BL} f="none" s={1.700} /><path d="M22 1v11l-6 10H5l5-3 1-5 5-4 2-6z" fill="#83beec" stroke={BL} /><path d="M-.5-.5h8v7L3.500 12-.5 6.500z" fill="#d9690f" /><circle cx="3.500" cy="3.500" r="1.300" fill="#fff" /><circle cx="19.500" cy="20" r="3.200" fill="#d9690f" /><circle cx="22" cy="13.500" r="1.800" fill="#d9690f" /></>,
  <g stroke="#8f3a9c" strokeWidth="1.500"><path d="M.8 11.500L8 2.500q1.500-1.500 3 0l1 1 1-1q1.500-1.500 3 0l6.500 9-6.500 8.500q-1.500 1.500-3 0l-1-1-1 1q-1.500 1.500-3 0z" fill="#fafafa" /><path d="M12 3.500L7 9.500l4.500 5.500 5-6-4.500-5.500M7 9.500L4 7M11.500 15l-3 5M12 19l4.500-5 3 2M16.500 9l3-2" /></g>,
  <g stroke="#1a7ad4" strokeWidth="1.600"><path d="M1 2h14l7.500 9-7.500 10H1l7-9.500z" fill="#fafafa" /><path d="M8 11.500L15 2M5 21L18 6M11 21l9.500-12" /></g>,
];

const CloseX = () => <Svg w={11} h={11} className="ml-[8px]"><path d="M.6 .6l9.800 9.800M10.400 .6L.6 10.400" stroke="#3b3a39" strokeWidth="1.2" /></Svg>;
const ChevD = () => <Svg w={14} h={8} className="ml-auto"><path d="M.5 .7L7 7 13.500 .7" stroke="#3b3a39" strokeWidth="1.100" /></Svg>;

function Chip({ t, w }) {
  return (
    <div className="mb-[2.250px] flex h-[28px] shrink-0 items-center rounded-[2px] border border-[#b8b6b4] bg-[#edebe9] pl-[5px] pr-[4px] text-[15px] text-[#252423]">
      <div className="w-0 whitespace-nowrap"><Fit w={w} className="">{t}</Fit></div>
      <ChevD />
      <CloseX />
    </div>
  );
}

function Visualizations() {
  const wells = [["Sum of Age", 77], ["Sum of Caffeine_Intake", 152], ["Sum of Physical_Activity", 158], ["Sum of Sleep_Duration", 151], ["Sum of Screen_Time", 134], ["Sum of Sleep_Quality", 141], ["Count of Student_ID", 134], ["Sum of Study_Hours", 134]];
  return (
    <div className="h-[790px] w-[226px] shrink-0 border-l border-[#dddbd9] bg-[#f3f2f1] text-[#252423]">
      <div className="flex h-[50px] items-center justify-between pl-[10px] pr-[10px]">
        <div className="text-[18px] font-semibold"><Fit w={123} className="">Visualizations</Fit></div>
        <Chevrons />
      </div>
      <div className="flex h-[16px] items-center pl-[10px] text-[15px]"><Fit w={77} className="font-medium">Build visual</Fit></div>
      <div className="mt-[6px] flex h-[40px] items-center pl-[10px]">
        <div className="flex h-[40px] w-[40px] items-center justify-center rounded-[2px] bg-[#d2d0ce]">
          <Svg w={30} h={30}>
            <path d="M0 1h24" stroke="#252423" strokeWidth="1.600" />
            <g fill="#117865" stroke="#1b1a19" strokeWidth="1.400" strokeDasharray="2.500 1.500"><rect x=".7" y="7.500" width="28.600" height="9" /><rect x=".7" y="20.500" width="28.600" height="9" /></g>
          </Svg>
        </div>
        <Svg w={28} h={29} className="ml-[51px]">
          <path d="M1 25V12h7V1h9v16M17 8h8M8 12v10" stroke="#252423" strokeWidth="1.500" />
          <path d="M27 10L16 21l3 3 8-12zM15 21c-4 0-3 5-9 6 5 3 12 1 12-3z" fill="#f3f2f1" stroke="#252423" strokeWidth="1.400" />
        </Svg>
        <Svg w={31} h={30} className="ml-[51px]">
          <circle cx="13" cy="13" r="12" stroke="#252423" strokeWidth="1.600" />
          <path d="M2 12l6 2 6-5 3 2 7-6M8 17v6M12 15v9M16 14v9M20 13v7" stroke="#252423" strokeWidth="1.500" />
          <path d="M21.500 21.500l8 8" stroke="#252423" strokeWidth="3.500" />
        </Svg>
      </div>
      <Svg w={225} h={11} className="mt-[5px]"><path d="M0 10H20L30 1 40 10H225" stroke="#8a8886" strokeWidth="1.300" /></Svg>
      <div className="grid grid-cols-[repeat(6,35px)] pl-[8px] pt-[7.500px]">
        {vizIcons.map((ic, i) => (
          <div key={i} className="flex h-[35px] items-center justify-center">
            <div className={"flex h-[30px] w-[30px] items-center justify-center " + (i === 1 ? "border border-[#252423]" : "")}>
              <Svg w={23} h={23}>{ic}</Svg>
            </div>
          </div>
        ))}
      </div>
      <Ell className="ml-[17px] mt-[14px]" />
      <div className="mt-[23px] h-px bg-[#dddbd9]" />
      <div className="flex h-[359px] overflow-hidden text-[14.500px]">
        <div className="w-[218px] pl-[4px]">
          <div className="flex h-[38px] items-center pl-[10px] pt-[6px]"><Fit w={40}>X-axis</Fit></div>
          <div className="h-[45px] w-[214px] border border-dashed border-[#b8b6b4] bg-white px-[3px] pt-[4px]"><Chip t="Gender" w={48} /></div>
          <div className="flex h-[40px] items-center pl-[10px] pt-[6px]"><Fit w={39}>Y-axis</Fit></div>
          <div className="h-[300px] w-[214px] border border-dashed border-[#b8b6b4] bg-white px-[3px] pt-[3px]">
            {wells.map(([t, w]) => <Chip key={t} t={t} w={w} />)}
          </div>
        </div>
        <div className="mt-[2px] h-[144px] w-[7px] rounded-full bg-[#d2d0ce]" />
      </div>
    </div>
  );
}

function DataPanel() {
  const fields = [["Age", 27, 1], ["Caffeine_Intake", 101, 1], ["Gender", 49, 0], ["Physical_Activity", 107, 1], ["Screen_Time", 83, 1], ["Sleep_Duration", 100, 1], ["Sleep_Quality", 90, 1], ["Student_ID", 72, 1], ["Study_Hours", 83, 1], ["University_Year", 99, 0], ["Weekday_Sleep...", 114, 1], ["Weekday_Sleep...", 114, 1], ["Weekend_Sleep...", 115, 1], ["Weekend_Sleep...", 115, 1]];
  return (
    <div className="h-[790px] w-[226px] shrink-0 border-l border-[#dddbd9] bg-[#f3f2f1] text-[#3b3a39]">
      <div className="flex h-[50px] items-center justify-between pl-[10px] pr-[10px] text-[#252423]">
        <div className="text-[18px] font-semibold"><Fit w={42} className="">Data</Fit></div>
        <Chevrons />
      </div>
      <div className="ml-[5px] mt-[7px] flex h-[30px] w-[215px] items-center rounded-[4px] border border-[#d1d1d1] border-b-[#605e5c] bg-white pl-[14px] text-[16px] text-[#605e5c]">
        <Svg w={18} h={18}><circle cx="7.500" cy="7.500" r="6.500" stroke="#605e5c" strokeWidth="1.300" /><path d="M12 12l5.500 5.500" stroke="#605e5c" strokeWidth="1.300" /></Svg>
        <div className="ml-[10px] pt-[3px]"><Fit w={52} className="">Search</Fit></div>
      </div>
      <div className="mt-[12px] flex h-[30px] items-center pl-[17px] text-[15px]">
        <Svg w={14} h={8}><path d="M.5 .7L7 7 13.500 .7" stroke="#605e5c" strokeWidth="1.200" /></Svg>
        <Svg w={22} h={24} className="ml-[6px] mt-[6px]">
          <rect x="1" y="1" width="14" height="14" rx="2.500" stroke="#252423" strokeWidth="1.400" /><path d="M5.500 1v14M10.500 1v14M1 5.500h14M1 10.500h14" stroke="#252423" strokeWidth="1.200" />
          <circle cx="15" cy="16.500" r="7.200" fill="#117865" /><path d="M12.500 16.500l2 2 3.500-3.500" stroke="#fff" strokeWidth="1.600" />
        </Svg>
        <Fit w={151} className="">student_sleep_patterns</Fit>
      </div>
      {fields.map(([t, w, s], i) => (
        <div key={i} className="flex h-[30px] items-center pl-[55px] text-[15px]">
          <Svg w={15} h={15} className="-mt-[1px]"><rect x=".4" y=".4" width="14.200" height="14.200" rx="1" fill="#117865" stroke="#7a6f6c" strokeWidth=".9" /><path d="M2.800 7.500l3.400 3.400 6.200-6.600" stroke="#fff" strokeWidth="1.300" /></Svg>
          <Svg w={14} h={15} className="-mt-[1px] ml-[11px] mr-[8px]">{s ? <path d="M13 3V.7H.8L7.300 7.300 .8 14.200H13V12" stroke="#3b3a39" strokeWidth="1.300" /> : null}</Svg>
          <Fit w={w}>{t}</Fit>
        </div>
      ))}
    </div>
  );
}

/* ---------- Bottom bars ---------- */
function PageBar() {
  return (
    <div className="flex h-[44px] w-[1417px] bg-[#f3f2f1]">
      <div className="ml-[12px] flex w-[30px] flex-col items-center pt-[9px]">
        <Svg w={24} h={18}><path d="M1 1h22v12H1zM12 13v4M8 17h8" stroke="#605e5c" strokeWidth="1.500" /></Svg>
        <div className="mt-[8px] h-[3px] w-[30px] rounded bg-[#117865]" />
      </div>
      <Svg w={16} h={25} className="ml-[32px] mt-[6px]"><rect x="1" y="1" width="14" height="23" rx="1.500" stroke="#484644" strokeWidth="1.600" /><path d="M6.500 20.500h3" stroke="#484644" strokeWidth="1.500" /></Svg>
      <Svg w={6} h={10} className="ml-[27px] mt-[17px]"><path d="M6 0v10L0 5z" fill="#c8c6c4" /></Svg>
      <Svg w={6} h={10} className="ml-[22px] mr-[8px] mt-[17px]"><path d="M0 0v10l6-5z" fill="#c8c6c4" /></Svg>
      <div className="flex w-[95px] items-center justify-center border-x border-b-[5px] border-x-[#c8c6c4] border-b-[#117865] bg-white pt-[5px] text-[14.500px] text-[#252423]"><Fit w={44} className="">Page 1</Fit></div>
      <div className="flex w-[49px] items-center justify-center bg-[#117865]"><Svg w={14} h={14} className="-mt-[3px]"><path d="M7 0v14M0 7h14" stroke="#fff" strokeWidth="3.600" /></Svg></div>
    </div>
  );
}

function StatusBar() {
  return (
    <div className="flex h-[30px] items-center border-t border-[#dddbd9] bg-[#f3f2f1] pl-[5px] text-[14.500px] text-[#605e5c]">
      <div className="flex pt-[2px]"><Fit w={74}>Page 1 of 1</Fit></div>
      <div className="grow" />
      <Svg w={152} h={14}>
        <path d="M11 7.500h125" stroke="#484644" strokeWidth="1.300" /><path d="M0 7h5.500M143 7h10M148 2v10" stroke="#605e5c" strokeWidth="2" />
        <path d="M73.500 4v7" stroke="#605e5c" strokeWidth="1.300" /><rect x="79" y="1" width="5" height="13" fill="#605e5c" />
      </Svg>
      <div className="ml-[18px] flex"><Fit w={36}>140%</Fit></div>
      <Svg w={21} h={16} className="ml-[15px] mr-[22px] mt-[1px]"><rect x=".8" y=".8" width="19.400" height="14" stroke="#605e5c" strokeWidth="1.500" /><path d="M4 6V3.500h3M14 3.500h3V6M17 9.500V12h-3M7 12H4V9.500" stroke="#605e5c" strokeWidth="1.300" /></Svg>
    </div>
  );
}

const apps = [
  <Svg key="tv" w={30} h={30}><rect x="0" y="9" width="22" height="20" rx="1" fill="#77787a" /><rect x="8" y="1" width="22" height="21" rx="1" fill="#f1f1f1" /><rect x="8" y="9" width="14" height="13" fill="#c2c3c4" /></Svg>,
  <CopilotMark key="cp" size={30} id="ct" />,
  <Svg key="fo" w={30} h={28}><path d="M0 3q0-2 2-2h8l3 3h15q2 0 2 2v18H0z" fill="#e3a008" /><path d="M0 7h30v18q0 2-2 2H2q-2 0-2-2z" fill="#ffcf48" /><path d="M5 27v-5q0-2 2-2h16q2 0 2 2v5z" fill="#1273c8" /><path d="M9 23.500h12" stroke="#0c4f90" strokeWidth="1.500" /></Svg>,
  <Svg key="st" w={29} h={30}><path d="M8 7V2q0-1 1-1h11q1 0 1 1v5" stroke="#38b6f0" strokeWidth="2" /><path d="M0 6h29v20q0 3-3 3H3q-3 0-3-3z" fill="#f4f4f4" /><rect x="8.500" y="12" width="5.500" height="5" fill="#f25022" /><rect x="15" y="12" width="5.500" height="5" fill="#7fba00" /><rect x="8.500" y="18" width="5.500" height="5" fill="#00a4ef" /><rect x="15" y="18" width="5.500" height="5" fill="#ffb900" /></Svg>,
  <Svg key="he" w={30} h={30}><circle cx="14.500" cy="15" r="14" fill="#0f9ad6" stroke="#fff" strokeWidth="1.600" /><path d="M9 12c0-8 11-7 11-1 0 4-5.500 4-5.500 8" stroke="#fff" strokeWidth="3.600" /><circle cx="14.500" cy="24" r="2.400" fill="#fff" /><circle cx="26" cy="4" r="10" fill="#ffb90d" /></Svg>,
  <Svg key="mc" w={28} h={30}><path d="M1 0l13 7L27 0v22l-13 8-13-8z" fill="#c6262e" /><path d="M8 10l6 4 6-4v9l-6 4-6-4z" fill="#1f2225" /></Svg>,
  <Svg key="ed" w={31} h={31}>
    <defs><linearGradient id="edg" x1="0" y1="0" x2="1" y2=".3"><stop offset="0" stopColor="#1c9fe0" /><stop offset="1" stopColor="#5fd65a" /></linearGradient></defs>
    <circle cx="15.500" cy="15.500" r="15.300" fill="#1377c8" />
    <path d="M.3 14C2-3 29-4 31 14c0 7-8 9-12 6 3-4 1-9-4-9C9 10 3 11 .3 14z" fill="url(#edg)" />
    <path d="M15 11c-4 2-4 13 6 15 4 .5 7-2 9-4-5 2-12 1-13-4 4 2 3-5-2-7z" fill="#1f2225" /><path d="M12 12c-5 5-2 16 7 18-9 2-18-5-18.500-14C3 12 8 11 12 12z" fill="#0f5fae" />
  </Svg>,
  <div key="hp" className="flex h-[30px] w-[30px] items-center justify-center rounded-[1px] bg-[#0a96d6] italic text-white"><Fit w={12} className="text-[9px] font-semibold">my</Fit><Fit w={13} className="text-[13px] font-semibold">hp</Fit></div>,
  <Svg key="se" w={30} h={30}>
    <g fill="#7d8691">{[0, 60, 120].map((a) => <rect key={a} x="11" y="0" width="8" height="30" rx="2" transform={`rotate(${a + 30} 15 15)`} />)}<circle cx="15" cy="15" r="11" /></g>
    <circle cx="15" cy="15" r="7.200" fill="#e8ecf0" /><circle cx="15" cy="15" r="5.800" fill="#0b5cad" />
  </Svg>,
  <Svg key="wp" w={30} h={30}><circle cx="15" cy="15" r="15" fill="#f5401c" /><path d="M5 11h5l3 11 4-9 4 9 5-11M12 11h8" stroke="#fff" strokeWidth="2.300" /><rect x="22" y="-1" width="10" height="12" rx="1.500" fill="#3fae49" /><path d="M29.500 2h-5v3h5v3.500h-5" stroke="#fff" strokeWidth="1.200" /></Svg>,
  <Svg key="ch" w={30} h={30}><circle cx="15" cy="15" r="15" fill="#2da94f" /><path d="M15 15L2 7.500A15 15 0 0 1 28 7.500z" fill="#e33b2e" /><path d="M15 7.500h13A15 15 0 0 1 15 30l6.500-11.500z" fill="#fdd116" /><circle cx="15" cy="15" r="7.500" fill="#fff" /><circle cx="15" cy="15" r="6" fill="#2f7bea" /></Svg>,
  <Svg key="pb" w={24} h={30}><path d="M14 0h9q1 0 1 1v29H14z" fill="#d98f0b" /><path d="M7 8q0-1 1-1h9q1 0 1 1v22H7z" fill="#efbb2b" /><path d="M0 16q0-1 1-1h9q1 0 1 1v14H0z" fill="#f7d45e" /></Svg>,
];
const running = [2, 3, 6, 8, 9, 10];

function Taskbar() {
  return (
    <div className="flex h-[60px] items-center bg-[#1f2225] text-white">
      <Svg w={30} h={28} className="ml-[25px]">
        <defs><linearGradient id="sun" x1="0" y1="0" x2="0" y2="1"><stop offset="0" stopColor="#ffc629" /><stop offset="1" stopColor="#e8620c" /></linearGradient></defs>
        <circle cx="15" cy="14" r="13" fill="url(#sun)" />
        <path d="M6 7h5M15 7h14M7 12h22M1 16.500h13M19 16.500h5M1 22h7M11 22h12" stroke="#8d8a86" strokeWidth="2.300" strokeLinecap="round" />
      </Svg>
      <div className="ml-[9px] w-[60px] pb-[2px] text-[14px] leading-[20px]">
        <div><Fit w={30} className="">90°F</Fit></div>
        <div className="text-[#c8c8c8]"><Fit w={33} className="">Haze</Fit></div>
      </div>
      <Svg w={29} h={29} className="ml-[351px]">
        <defs><linearGradient id="win" x1="0" y1="0" x2="1" y2="1"><stop offset="0" stopColor="#7fe0ff" /><stop offset="1" stopColor="#0a94f5" /></linearGradient></defs>
        <path d="M0 0h14v14H0zM15.300 0H29v14H15.300zM0 15.300h14V29H0zM15.300 15.300H29V29H15.300z" fill="url(#win)" />
      </Svg>
      <div className="ml-[17px] flex h-[40px] w-[275px] items-center rounded-full border border-[#4c5053] bg-[#3a3d40] pl-[14px] text-[16px] text-[#d4d4d4]">
        <Svg w={18} h={19}><circle cx="8" cy="8" r="6.800" stroke="#e8e8e8" strokeWidth="1.900" /><path d="M12.500 13l5 5.500" stroke="#e8e8e8" strokeWidth="2.200" /></Svg>
        <div className="ml-[13px]"><Fit w={52} className="">Search</Fit></div>
        <Svg w={58} h={34} className="ml-[113px]">
          <ellipse cx="29" cy="29" rx="28" ry="4.500" fill="#6d8f3a" />
          <path d="M16 12C20-2 49-3 50 16c0 4-1 7-2 9v4h-6v-4H29l-1 5h-6l-3-8z" fill="#a9784e" />
          <path d="M20 5C30-3 47 1 49 12q-12-8-28-5z" fill="#c2946a" />
          <path d="M5 8l1-6 4 2h5l5-3v6c3 6-1 14-8 14-6 0-8-6-7-13z" fill="#b98a60" />
          <path d="M30 30v-4M38 29v-4" stroke="#7a5232" strokeWidth="1.500" />
          <ellipse cx="12" cy="17" rx="3" ry="2.300" fill="#3a2517" /><circle cx="8.500" cy="12" r="1" fill="#1a100a" /><circle cx="16" cy="12.500" r="1" fill="#1a100a" />
        </Svg>
      </div>
      <div className="ml-[2px] flex">
        {apps.map((a, i) => (
          <div key={i} className="flex h-[60px] w-[55px] items-center justify-center">
            <div className={"flex h-[50px] w-[50px] flex-col items-center rounded-[5px] pt-[10px] " + (i === 11 ? "border border-[#3a3d40] bg-[#2e3134] pt-[9px]" : "")}>
              <div className="flex h-[30px] items-center">{a}</div>
              <div className={"mt-[5.500px] h-[3.500px] rounded-full " + (i === 11 ? "w-[20px] bg-[#4cc2ff]" : running.includes(i) ? "w-[8px] bg-[#9a9b9d]" : "w-0")} />
            </div>
          </div>
        ))}
      </div>
      <Svg w={14} h={8} className="ml-[98px]"><path d="M1 7l6-6 6 6" stroke="#fff" strokeWidth="1.900" /></Svg>
      <Svg w={21} h={18} className="ml-[23px]"><path d="M4 15C-1 15-1 8 4 7.500 6 1 14 1 15.500 7c6 0 6 8 0 8z" fill="#8d8f91" /><path d="M3 1l15 16" stroke="#fff" strokeWidth="1.300" /></Svg>
      <div className="ml-[22px] w-[30px] pb-[1px] text-center text-[14.500px] leading-[20px]"><div><Fit w={28} className="">ENG</Fit></div><div><Fit w={14} className="">IN</Fit></div></div>
      <Svg w={21} h={20} className="ml-[22px]">
        <circle cx="10" cy="10" r="9.200" stroke="#fff" strokeWidth="1.300" /><ellipse cx="10" cy="10" rx="4.200" ry="9.200" stroke="#fff" strokeWidth="1.300" /><path d="M1.500 7h17M1.500 13h9" stroke="#fff" strokeWidth="1.300" />
        <circle cx="15" cy="15" r="6" fill="#1f2225" /><circle cx="15" cy="15" r="4.700" stroke="#fff" strokeWidth="1.400" /><path d="M12 18l6-6" stroke="#fff" strokeWidth="1.300" />
      </Svg>
      <Svg w={20} h={16} className="ml-[9px]"><path d="M1 5.500h3.500L9 1.500v13l-4.500-4H1z" stroke="#fff" strokeWidth="1.300" /><path d="M12.500 5l6 6M18.500 5l-6 6" stroke="#fff" strokeWidth="1.300" /></Svg>
      <Svg w={21} h={17} className="ml-[10px]"><path d="M7 3.500h8q2 0 2 2v8q0 2-2 2H4q-2 0-2-2V10" stroke="#fff" strokeWidth="1.400" /><rect x="5" y="6" width="10" height="7.500" fill="#fff" /><rect x="18" y="7" width="2" height="5" fill="#fff" /><path d="M4-1L0 6h3v4l4-7H4z" fill="#fff" /></Svg>
      <div className="ml-auto w-[78px] text-right text-[14.500px] leading-[20px]"><div><Fit w={36} className="">15:56</Fit></div><div><Fit w={78} className="">22-10-2024</Fit></div></div>
      <Svg w={18} h={18} className="ml-[11px] mr-[25px]"><path d="M9 2C5 2 3 4 3 8v4l-2 2.500h15L14 12v-1M6 15c1 3 4 3 5 0" stroke="#fff" strokeWidth="1.400" /><path d="M6.500 7H10l-3.500 4H10M12.500 1H17l-4.500 5H17" stroke="#fff" strokeWidth="1.400" /></Svg>
    </div>
  );
}

export default function App() {
  return (
    <div className="h-[1080px] w-[1920px] overflow-hidden bg-[#f3f2f1] font-['Open_Sans',sans-serif]">
      <TitleBar />
      <Ribbon />
      <div className="flex h-[790px]">
        <Rail />
        <div className="w-[1417px]">
          <div className="flex"><Canvas /><Filters /></div>
          <PageBar />
        </div>
        <Visualizations />
        <DataPanel />
      </div>
      <StatusBar />
      <Taskbar />
    </div>
  );
}
